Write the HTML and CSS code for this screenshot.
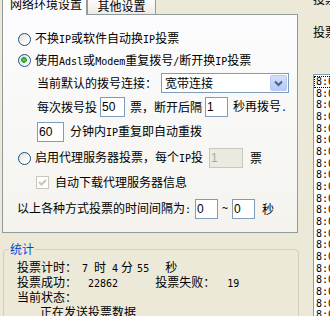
FILE: index.html
```html
<!DOCTYPE html>
<html lang="zh-CN">
<head>
<meta charset="utf-8">
<title>投票设置</title>
<link rel="stylesheet" href="styles.css">
</head>
<body>
<div class="page">
  <div class="main">
    <div class="tabs">
      <div class="tab active">网络环境设置</div>
      <div class="tab">其他设置</div>
    </div>
    <div class="panel">
      <div class="row r1 opt"><span class="radio"></span><span class="txt">不换<span class="l">IP</span>或软件自动换<span class="l">IP</span>投票</span></div>
      <div class="row r2 opt"><span class="radio on"></span><span class="txt">使用<span class="l">Adsl</span>或<span class="l">Modem</span>重复拨号<span class="l">/</span>断开换<span class="l">IP</span>投票</span></div>
      <div class="row r3 sub"><span>当前默认的拨号连接：</span><div class="combo"><span class="combo-text">宽带连接</span><span class="combo-btn"><svg width="15" height="14" viewBox="0 0 15 14"><path d="M4 5.5 L7.5 9 L11 5.5" fill="none" stroke="#4D6185" stroke-width="2"/></svg></span></div></div>
      <div class="row r4 sub"><span>每次拨号投</span><input class="num w25 ml3" value="50"><span class="ml5">票，断开后隔</span><input class="num w23 ml3" value="1"><span class="ml5">秒再拨号<span class="l">.</span></span></div>
      <div class="row r5 sub"><input class="num w27" value="60"><span class="ml6">分钟内<span class="l">IP</span>重复即自动重拨</span></div>
      <div class="row r6 opt"><span class="radio"></span><span class="txt">启用代理服务器投票，每个<span class="l">IP</span>投</span><input class="num dis w34 ml6" value="1" disabled><span class="ml7">票</span></div>
      <div class="row r7 chk"><span class="checkbox"><svg width="11" height="11" viewBox="0 0 11 11"><path d="M2 5 L4.5 7.5 L9 3" fill="none" stroke="#CAC8BB" stroke-width="2"/></svg></span><span class="ml6">自动下载代理服务器信息</span></div>
      <div class="row r8"><span>以上各种方式投票的时间间隔为<span class="l">:</span></span><input class="num w23 ml4" value="0"><span class="l tilde">~</span><input class="num w23" value="0"><span class="ml7">秒</span></div>
    </div>
    <fieldset class="stats">
      <legend>统计</legend>
      <div class="lines">
        <div class="line"><span>投票计时：</span><span class="l m5">7</span><span class="m6">时</span><span class="l m6">4</span><span class="m3">分</span><span class="l m4">55</span><span class="m16">秒</span></div>
        <div class="line"><span>投票成功：</span><span class="l m11">22862</span><span class="m37">投票失败：</span><span class="l m12">19</span></div>
        <div class="line"><span>当前状态：</span></div>
        <div class="line status"><span>正在发送投票数据</span></div>
      </div>
    </fieldset>
  </div>
  <div class="side">
    <div class="side-t1">投票</div>
    <div class="side-t2">投票</div>
    <div class="list">
      <div class="item focus">8:05:21</div>
      <div class="item">8:05:20</div>
      <div class="item">8:05:20</div>
      <div class="item">8:05:19</div>
      <div class="item">8:05:19</div>
      <div class="item">8:05:18</div>
      <div class="item">8:05:18</div>
      <div class="item">8:05:17</div>
      <div class="item">8:05:17</div>
      <div class="item">8:05:16</div>
      <div class="item">8:05:16</div>
      <div class="item">8:05:15</div>
      <div class="item">8:05:15</div>
      <div class="item">8:05:14</div>
      <div class="item">8:05:14</div>
      <div class="item">8:05:13</div>
      <div class="item">8:05:13</div>
      <div class="item">8:05:12</div>
      <div class="item">8:05:12</div>
      <div class="item">8:05:11</div>
      <div class="item">8:05:11</div>
    </div>
  </div>
</div>
</body>
</html>
```
FILE: styles.css
```css
html, body {
  margin: 0;
  overflow: hidden;
}
body {
  width: 330px;
  height: 316px;
  background: #ECE9D8;
  color: #000;
  font: 12px/14px "Noto Sans CJK SC", sans-serif;
}
.page {
  display: grid;
  grid-template-columns: 300px 30px;
}
.main {
  min-width: 0;
}
.l {
  font-family: "DejaVu Sans Mono", monospace;
  font-size: 10px;
}

/* tabs */
.tabs {
  display: flex;
  align-items: flex-end;
  height: 14px;
}
.tab {
  box-sizing: border-box;
  border: 1px solid #919B9C;
  border-bottom: 0;
  border-radius: 3px 3px 0 0;
  line-height: 12px;
  white-space: nowrap;
}
.tab.active {
  position: relative;
  z-index: 1;
  margin-left: 2px;
  margin-bottom: -1px;
  width: 85px;
  height: 21px;
  padding: 3px 0 0 7px;
  background: #FCFCFE;
}
.tab:not(.active) {
  width: 69px;
  height: 18px;
  padding-top: 3px;
  text-align: center;
  background: linear-gradient(#FFFFFF, #ECEBE6);
}

/* panel */
.panel {
  box-sizing: border-box;
  margin-left: 2px;
  width: 296px;
  height: 219px;
  padding-top: 13px;
  border: 1px solid #919B9C;
  background: linear-gradient(#FCFCFE, #F4F3EE);
}
.row {
  display: flex;
  align-items: center;
  white-space: nowrap;
}
.r1 { height: 22px; }
.r2 { height: 21px; }
.r3 { height: 24px; }
.r4 { height: 24px; }
.r5 { height: 25px; }
.r6 { height: 28px; }
.r7 { height: 20px; }
.r8 { height: 34px; padding-left: 14px; }
.opt { padding-left: 15px; }
.sub { padding-left: 34px; }
.chk { padding-left: 33px; }

.radio {
  flex: none;
  box-sizing: border-box;
  width: 13px;
  height: 13px;
  margin-right: 4px;
  border: 1px solid #1C5180;
  border-radius: 50%;
  background: linear-gradient(135deg, #DCDCD7, #FFFFFF 75%);
}
.radio.on {
  background:
    radial-gradient(circle at 45% 45%, #5FD75B 0, #21A121 2.6px, transparent 3.1px),
    linear-gradient(135deg, #DCDCD7, #FFFFFF 75%);
}
.checkbox {
  flex: none;
  box-sizing: border-box;
  width: 13px;
  height: 13px;
  border: 1px solid #CAC8BB;
  background: #FFFFFF;
  display: flex;
  align-items: center;
  justify-content: center;
}

.num {
  box-sizing: border-box;
  height: 20px;
  margin: 0;
  padding: 0 1px;
  border: 1px solid #7F9DB9;
  background: #FFFFFF;
  color: #000;
  font: 12px "Liberation Sans", sans-serif;
  outline: none;
}
.num.dis {
  border-color: #C9C7BA;
  background: #ECEAE0;
  color: #ACA899;
}
.w23 { width: 23px; }
.w25 { width: 25px; }
.w27 { width: 27px; }
.w34 { width: 34px; }
.ml3 { margin-left: 3px; }
.ml4 { margin-left: 4px; }
.ml5 { margin-left: 5px; }
.ml6 { margin-left: 6px; }
.ml7 { margin-left: 7px; }
.tilde { margin: 0 4px; }

.combo {
  display: flex;
  align-items: center;
  box-sizing: border-box;
  width: 128px;
  height: 20px;
  margin-left: 4px;
  padding: 1px;
  border: 1px solid #7F9DB9;
  background: #FFFFFF;
}
.combo-text {
  flex: 1;
  padding-left: 2px;
}
.combo-btn {
  box-sizing: border-box;
  width: 17px;
  height: 16px;
  border: 1px solid #B7CAF6;
  border-radius: 2px;
  background: linear-gradient(#D2DFFD, #B5C9F7);
  display: flex;
  align-items: center;
  justify-content: center;
}

/* stats */
.stats {
  box-sizing: border-box;
  width: 296px;
  height: 110px;
  min-width: 0;
  margin: 10px 0 0 3px;
  padding: 0 0 0 5px;
  border: 1px solid #D0D0BF;
  border-radius: 4px;
}
.stats legend {
  padding: 0 1px;
  line-height: 12px;
  color: #0046D5;
}
.lines {
  padding: 4px 0 0 8px;
}
.line {
  display: flex;
  align-items: baseline;
  height: 15px;
  line-height: 15px;
  white-space: nowrap;
}
.status { padding-left: 23px; }
.m3 { margin-left: 3px; }
.m4 { margin-left: 4px; }
.m5 { margin-left: 5px; }
.m6 { margin-left: 6px; }
.m11 { margin-left: 11px; }
.m12 { margin-left: 12px; }
.m16 { margin-left: 16px; }
.m37 { margin-left: 37px; }

/* right side */
.side {
  padding-left: 13px;
  white-space: nowrap;
}
.side-t1 {
  margin-top: -8px;
  line-height: 14px;
}
.side-t2 {
  margin-top: 19px;
  line-height: 14px;
}
.list {
  width: 60px;
  height: 260px;
  margin-top: 35px;
  padding-top: 1px;
  border: 1px solid #7F9DB9;
  background: #FFFFFF;
  font: 10px/11.67px "DejaVu Sans Mono", monospace;
}
.item {
  padding-left: 2px;
}
.item.focus {
  outline: 1px dotted #000;
  outline-offset: -1px;
}
```
